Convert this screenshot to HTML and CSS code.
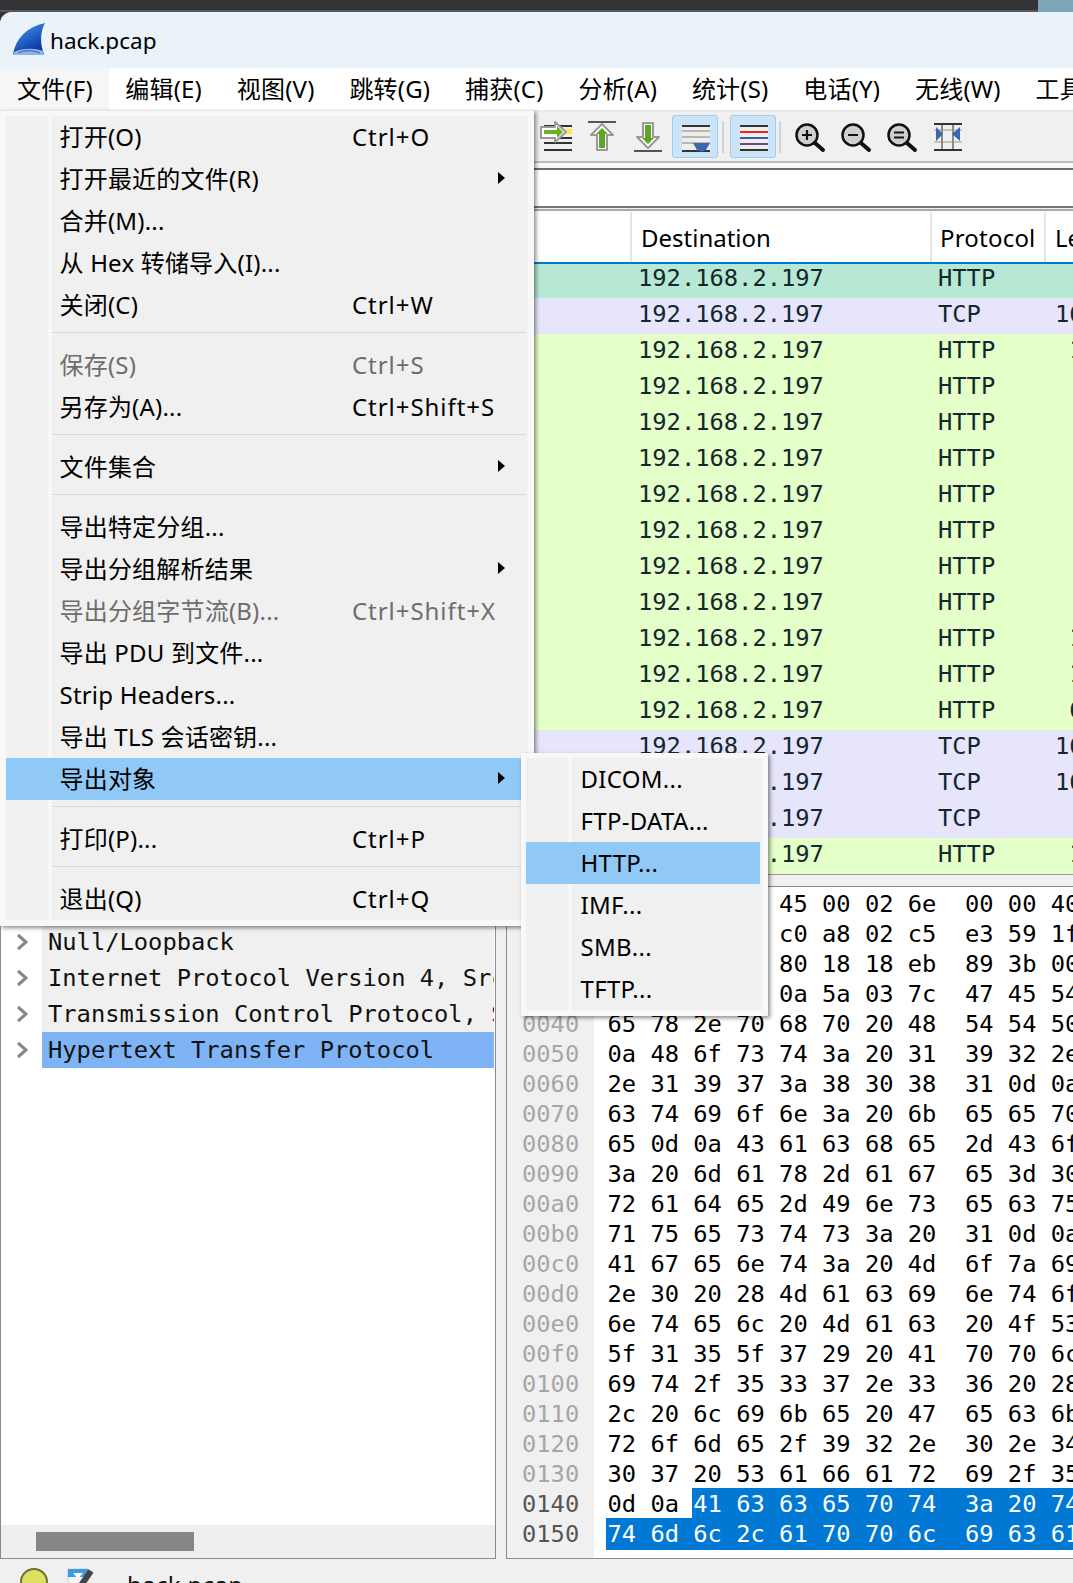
FILE: index.html
```html
<!DOCTYPE html>
<html lang="zh-CN">
<head>
<meta charset="utf-8">
<title>hack.pcap</title>
<link rel="stylesheet" href="styles.css">
</head>
<body>
<div class="desk"><div class="desk-dark"></div><div class="desk-wall"></div></div>
<div class="window">
  <header class="titlebar">
    <svg class="shark" viewBox="0 0 32 32">
      <defs><linearGradient id="sk" x1="0.2" y1="0.1" x2="0.7" y2="1"><stop offset="0" stop-color="#3a90ea"/><stop offset="1" stop-color="#0a2c9c"/></linearGradient></defs>
      <path d="M0 31C3 15 14 4 32 0C27 9 27 21 31 31Z" fill="url(#sk)"/>
      <path d="M1 29C10 25 22 25 30 28L31 32L0 32Z" fill="#8fb4e6"/>
      <path d="M5 30C12 27 20 27 27 30" fill="none" stroke="#2c62c0" stroke-width="1"/>
    </svg>
    <span class="title-text">hack.pcap</span>
  </header>
  <nav class="menubar">
    <span class="mb-item mb-open">文件(F)</span>
    <span class="mb-item">编辑(E)</span>
    <span class="mb-item">视图(V)</span>
    <span class="mb-item">跳转(G)</span>
    <span class="mb-item">捕获(C)</span>
    <span class="mb-item">分析(A)</span>
    <span class="mb-item">统计(S)</span>
    <span class="mb-item">电话(Y)</span>
    <span class="mb-item">无线(W)</span>
    <span class="mb-item">工具(T)</span>
  </nav>
  <div class="toolbar">
    <span class="tool"><svg class="ic" viewBox="0 0 32 32">
      <path d="M4 5H32M16 17H32M4 22H32M4 29H32" stroke="#333" stroke-width="2" fill="none"/>
      <rect x="20" y="8" width="12" height="5" fill="#ffe45c"/>
      <path d="M1 6H15V1L26 11L15 21V17H1Z" fill="#fff" stroke="#999" stroke-width="2" stroke-linejoin="round"/>
      <path d="M4 9H17V5L23 11L17 17V13H4Z" fill="#6cb02a"/>
    </svg></span>
    <span class="tool"><svg class="ic" viewBox="0 0 32 32">
      <path d="M2 1H30" stroke="#555" stroke-width="2"/>
      <path d="M16 3L27 14H21V29H11V14H5Z" fill="#fff" stroke="#999" stroke-width="2" stroke-linejoin="round"/>
      <path d="M16 7L22 13H19V27H13V13H10Z" fill="#5fa61e"/>
    </svg></span>
    <span class="tool"><svg class="ic" viewBox="0 0 32 32">
      <path d="M2 30H30" stroke="#555" stroke-width="2"/>
      <path d="M16 27L27 16H21V2H11V16H5Z" fill="#fff" stroke="#999" stroke-width="2" stroke-linejoin="round"/>
      <path d="M16 23L22 17H19V4H13V17H10Z" fill="#5fa61e"/>
    </svg></span>
    <span class="tool tool-on tool-first"><svg class="ic" viewBox="0 0 32 32">
      <rect x="3" y="5" width="28" height="26" fill="#eeeeee"/>
      <path d="M3 10H31M3 16H31M3 22H31" stroke="#b8b8ae" stroke-width="2"/>
      <path d="M3 5H31M3 30H31" stroke="#333" stroke-width="2"/>
      <path d="M14 22H31L27 29L22.500 31L18 29Z" fill="#3a68ae"/>
    </svg></span>
    <span class="tool-sep"></span>
    <span class="tool tool-on"><svg class="ic" viewBox="0 0 32 32">
      <rect x="3" y="5" width="28" height="25" fill="#eeeeee"/>
      <path d="M3 5H31M3 29H31" stroke="#333" stroke-width="2"/>
      <path d="M3 11H31" stroke="#e8262a" stroke-width="2"/>
      <path d="M3 17H31" stroke="#3464a8" stroke-width="2"/>
      <path d="M3 23H31" stroke="#6e4a80" stroke-width="2"/>
    </svg></span>
    <span class="tool-sep tool-sep-2"></span>
    <span class="tool"><svg class="ic" viewBox="0 0 32 32">
      <circle cx="13" cy="14" r="10.500" fill="#cfcfcf" stroke="#111" stroke-width="2.500"/>
      <path d="M21 22L29 29" stroke="#111" stroke-width="4" stroke-linecap="round"/>
      <path d="M8 14H18M13 9V19" stroke="#111" stroke-width="2.200"/>
    </svg></span>
    <span class="tool"><svg class="ic" viewBox="0 0 32 32">
      <circle cx="13" cy="14" r="10.500" fill="#cfcfcf" stroke="#111" stroke-width="2.500"/>
      <path d="M21 22L29 29" stroke="#111" stroke-width="4" stroke-linecap="round"/>
      <path d="M8 14H18" stroke="#111" stroke-width="2.200"/>
    </svg></span>
    <span class="tool"><svg class="ic" viewBox="0 0 32 32">
      <circle cx="13" cy="14" r="10.500" fill="#cfcfcf" stroke="#111" stroke-width="2.500"/>
      <path d="M21 22L29 29" stroke="#111" stroke-width="4" stroke-linecap="round"/>
      <path d="M8 11.500H18M8 16.500H18" stroke="#111" stroke-width="2.200"/>
    </svg></span>
    <span class="tool"><svg class="ic" viewBox="0 0 32 32">
      <path d="M2 9H30M2 21H30" stroke="#c4c4bc" stroke-width="2"/>
      <path d="M10 3V29M21 3V29" stroke="#8a8a8a" stroke-width="2"/>
      <path d="M2 3H30M2 29H30" stroke="#333" stroke-width="2"/>
      <path d="M4 6L11 13L4 20Z M28 6L20 13L28 20Z" fill="#3a68ae"/>
    </svg></span>
  </div>
  <div class="rule-gray"></div>
  <div class="rule-gap"></div>
  <div class="filterbar"></div>
  <div class="rule-double"></div>

  <section class="plist">
    <div class="phead">
      <span class="ph"></span>
      <span class="ph ph-dst">Destination</span>
      <span class="ph ph-pro">Protocol</span>
      <span class="ph ph-len">Length</span>
    </div>
    <div class="prow r-sel"><span></span><span class="p-dst">192.168.2.197</span><span class="p-pro">HTTP</span><span class="p-len"></span></div>
    <div class="prow r-tcp"><span></span><span class="p-dst">192.168.2.197</span><span class="p-pro">TCP</span><span class="p-len">16</span></div>
    <div class="prow r-http"><span></span><span class="p-dst">192.168.2.197</span><span class="p-pro">HTTP</span><span class="p-len"> 1</span></div>
    <div class="prow r-http"><span></span><span class="p-dst">192.168.2.197</span><span class="p-pro">HTTP</span><span class="p-len"></span></div>
    <div class="prow r-http"><span></span><span class="p-dst">192.168.2.197</span><span class="p-pro">HTTP</span><span class="p-len"></span></div>
    <div class="prow r-http"><span></span><span class="p-dst">192.168.2.197</span><span class="p-pro">HTTP</span><span class="p-len"></span></div>
    <div class="prow r-http"><span></span><span class="p-dst">192.168.2.197</span><span class="p-pro">HTTP</span><span class="p-len"></span></div>
    <div class="prow r-http"><span></span><span class="p-dst">192.168.2.197</span><span class="p-pro">HTTP</span><span class="p-len"></span></div>
    <div class="prow r-http"><span></span><span class="p-dst">192.168.2.197</span><span class="p-pro">HTTP</span><span class="p-len"></span></div>
    <div class="prow r-http"><span></span><span class="p-dst">192.168.2.197</span><span class="p-pro">HTTP</span><span class="p-len"></span></div>
    <div class="prow r-http"><span></span><span class="p-dst">192.168.2.197</span><span class="p-pro">HTTP</span><span class="p-len"> 1</span></div>
    <div class="prow r-http"><span></span><span class="p-dst">192.168.2.197</span><span class="p-pro">HTTP</span><span class="p-len"> 1</span></div>
    <div class="prow r-http"><span></span><span class="p-dst">192.168.2.197</span><span class="p-pro">HTTP</span><span class="p-len"> 6</span></div>
    <div class="prow r-tcp"><span></span><span class="p-dst">192.168.2.197</span><span class="p-pro">TCP</span><span class="p-len">16</span></div>
    <div class="prow r-tcp"><span></span><span class="p-dst">192.168.2.197</span><span class="p-pro">TCP</span><span class="p-len">16</span></div>
    <div class="prow r-tcp"><span></span><span class="p-dst">192.168.2.197</span><span class="p-pro">TCP</span><span class="p-len"></span></div>
    <div class="prow r-http"><span></span><span class="p-dst">192.168.2.197</span><span class="p-pro">HTTP</span><span class="p-len"> 1</span></div>
  </section>

  <div class="panes">
    <section class="tree">
      <div class="tree-list">
        <div class="trow"><span class="twist"></span><span class="ttext ttext-blank"></span></div>
        <div class="trow"><span class="twist"><svg class="chev" viewBox="0 0 12 18"><path d="M2 2L10 9L2 16"/></svg></span><span class="ttext">Null/Loopback</span></div>
        <div class="trow"><span class="twist"><svg class="chev" viewBox="0 0 12 18"><path d="M2 2L10 9L2 16"/></svg></span><span class="ttext">Internet Protocol Version 4, Src: 192.168.2.1</span></div>
        <div class="trow"><span class="twist"><svg class="chev" viewBox="0 0 12 18"><path d="M2 2L10 9L2 16"/></svg></span><span class="ttext">Transmission Control Protocol, Src Port: 8081</span></div>
        <div class="trow"><span class="twist"><svg class="chev" viewBox="0 0 12 18"><path d="M2 2L10 9L2 16"/></svg></span><span class="ttext ttext-sel">Hypertext Transfer Protocol</span></div>
      </div>
      <div class="hscroll"><span class="hthumb"></span></div>
    </section>
    <section class="hex">
      <div class="hrow"><span class="hoff">0000</span><span class="hbytes">            45 00 02 6e  00 00 40</span></div>
      <div class="hrow"><span class="hoff">0010</span><span class="hbytes">            c0 a8 02 c5  e3 59 1f</span></div>
      <div class="hrow"><span class="hoff">0020</span><span class="hbytes">            80 18 18 eb  89 3b 00</span></div>
      <div class="hrow"><span class="hoff">0030</span><span class="hbytes">            0a 5a 03 7c  47 45 54</span></div>
      <div class="hrow"><span class="hoff">0040</span><span class="hbytes">65 78 2e 70 68 70 20 48  54 54 50</span></div>
      <div class="hrow"><span class="hoff">0050</span><span class="hbytes">0a 48 6f 73 74 3a 20 31  39 32 2e</span></div>
      <div class="hrow"><span class="hoff">0060</span><span class="hbytes">2e 31 39 37 3a 38 30 38  31 0d 0a</span></div>
      <div class="hrow"><span class="hoff">0070</span><span class="hbytes">63 74 69 6f 6e 3a 20 6b  65 65 70</span></div>
      <div class="hrow"><span class="hoff">0080</span><span class="hbytes">65 0d 0a 43 61 63 68 65  2d 43 6f</span></div>
      <div class="hrow"><span class="hoff">0090</span><span class="hbytes">3a 20 6d 61 78 2d 61 67  65 3d 30</span></div>
      <div class="hrow"><span class="hoff">00a0</span><span class="hbytes">72 61 64 65 2d 49 6e 73  65 63 75</span></div>
      <div class="hrow"><span class="hoff">00b0</span><span class="hbytes">71 75 65 73 74 73 3a 20  31 0d 0a</span></div>
      <div class="hrow"><span class="hoff">00c0</span><span class="hbytes">41 67 65 6e 74 3a 20 4d  6f 7a 69</span></div>
      <div class="hrow"><span class="hoff">00d0</span><span class="hbytes">2e 30 20 28 4d 61 63 69  6e 74 6f</span></div>
      <div class="hrow"><span class="hoff">00e0</span><span class="hbytes">6e 74 65 6c 20 4d 61 63  20 4f 53</span></div>
      <div class="hrow"><span class="hoff">00f0</span><span class="hbytes">5f 31 35 5f 37 29 20 41  70 70 6c</span></div>
      <div class="hrow"><span class="hoff">0100</span><span class="hbytes">69 74 2f 35 33 37 2e 33  36 20 28</span></div>
      <div class="hrow"><span class="hoff">0110</span><span class="hbytes">2c 20 6c 69 6b 65 20 47  65 63 6b</span></div>
      <div class="hrow"><span class="hoff">0120</span><span class="hbytes">72 6f 6d 65 2f 39 32 2e  30 2e 34</span></div>
      <div class="hrow"><span class="hoff">0130</span><span class="hbytes">30 37 20 53 61 66 61 72  69 2f 35</span></div>
      <div class="hrow"><span class="hoff hoff-on">0140</span><span class="hbytes">0d 0a <span class="hsel">41 63 63 65 70 74  3a 20 74</span></span></div>
      <div class="hrow hrow-last"><span class="hoff hoff-on">0150</span><span class="hbytes"><span class="hsel">74 6d 6c 2c 61 70 70 6c  69 63 61</span></span></div>
    </section>
  </div>

  <footer class="statusbar">
    <span class="led"></span>
    <svg class="note" viewBox="0 0 28 30">
      <rect x="1" y="2" width="20" height="28" fill="#f4f4f4" stroke="#ccc"/>
      <rect x="1" y="2" width="20" height="8" fill="#3f9be0"/>
      <path d="M6 6L11 12L16 6Z" fill="#fff"/>
      <path d="M8 27L24 4" stroke="#444" stroke-width="6"/>
      <path d="M4 18H14M4 21H11" stroke="#aaa" stroke-width="1.500"/>
    </svg>
    <span class="status-text">hack.pcap</span>
  </footer>

  <div class="menu">
    <div class="menu-in">
      <div class="mi"><span class="mi-label">打开(O)</span><span class="mi-key">Ctrl+O</span></div>
      <div class="mi"><span class="mi-label">打开最近的文件(R)</span><span class="arr"></span></div>
      <div class="mi"><span class="mi-label">合并(M)...</span></div>
      <div class="mi"><span class="mi-label">从 Hex 转储导入(I)...</span></div>
      <div class="mi"><span class="mi-label">关闭(C)</span><span class="mi-key">Ctrl+W</span></div>
      <div class="msep"></div>
      <div class="mi mi-off"><span class="mi-label">保存(S)</span><span class="mi-key">Ctrl+S</span></div>
      <div class="mi"><span class="mi-label">另存为(A)...</span><span class="mi-key">Ctrl+Shift+S</span></div>
      <div class="msep"></div>
      <div class="mi"><span class="mi-label">文件集合</span><span class="arr"></span></div>
      <div class="msep"></div>
      <div class="mi"><span class="mi-label">导出特定分组...</span></div>
      <div class="mi"><span class="mi-label">导出分组解析结果</span><span class="arr"></span></div>
      <div class="mi mi-off"><span class="mi-label">导出分组字节流(B)...</span><span class="mi-key">Ctrl+Shift+X</span></div>
      <div class="mi"><span class="mi-label">导出 PDU 到文件...</span></div>
      <div class="mi"><span class="mi-label">Strip Headers...</span></div>
      <div class="mi"><span class="mi-label">导出 TLS 会话密钥...</span></div>
      <div class="mi mi-hot"><span class="mi-label">导出对象</span><span class="arr"></span></div>
      <div class="msep"></div>
      <div class="mi"><span class="mi-label">打印(P)...</span><span class="mi-key">Ctrl+P</span></div>
      <div class="msep"></div>
      <div class="mi"><span class="mi-label">退出(Q)</span><span class="mi-key">Ctrl+Q</span></div>
    </div>
  </div>

  <div class="submenu">
    <div class="sub-in">
      <div class="si">DICOM...</div>
      <div class="si">FTP-DATA...</div>
      <div class="si si-hot">HTTP...</div>
      <div class="si">IMF...</div>
      <div class="si">SMB...</div>
      <div class="si">TFTP...</div>
    </div>
  </div>
</div>
</body>
</html>
```
FILE: styles.css
```css
html, body {
  margin: 0;
  padding: 0;
  height: 1583px;
  overflow: hidden;
  background: #333336;
}
body {
  font-family: "Noto Sans", "Noto Sans CJK SC", sans-serif;
  font-size: 24px;
  color: #000;
}
.desk {
  display: flex;
  height: 12px;
}
.desk-dark {
  flex: 1;
  background: #333336;
  border-bottom: 2px solid #58585c;
}
.desk-wall {
  width: 35px;
  background: #7fa6b8;
}
.window {
  position: relative;
  width: 1073px;
  height: 1571px;
  background: #f0f0f0;
  border-radius: 12px 0 0 0;
  overflow: hidden;
}
.titlebar {
  display: flex;
  align-items: center;
  height: 56px;
  background: #ebf3fa;
  padding-left: 13px;
  box-sizing: border-box;
}
.shark {
  width: 32px;
  height: 32px;
  margin-top: -2px;
}
.title-text {
  margin-left: 5px;
  font-size: 22.5px;
  line-height: 32px;
  margin-top: 2px;
}
.menubar {
  display: flex;
  height: 42px;
  background: #fff;
  white-space: nowrap;
}
.mb-item {
  padding: 0 17.4px;
  line-height: 42px;
  height: 42px;
  flex: none;
  letter-spacing: .2px;
}
.mb-open {
  background: #f6f6f6;
  padding: 0 16px 0 17px;
}
.mb-open + .mb-item {
  margin-left: -1px;
}
.toolbar {
  display: flex;
  align-items: flex-start;
  height: 51px;
  box-sizing: border-box;
  border-top: 2px solid #e8e8e8;
  padding: 3px 0 0 533px;
  background: #f0f0f0;
}
.tool {
  display: flex;
  justify-content: center;
  align-items: flex-start;
  box-sizing: border-box;
  width: 46px;
  height: 43px;
  padding-top: 5px;
  border: 1px solid transparent;
  border-radius: 3px;
  flex: none;
}
.tool-first {
  margin-left: 1px;
}
.tool-on {
  background: #cce4f7;
  border-color: #9ccdf5;
}
.ic {
  width: 32px;
  height: 32px;
}
.tool-sep {
  width: 2px;
  height: 32px;
  margin: 6px 6px 0 4px;
  background: #d4d4d4;
  flex: none;
}
.tool-sep-2 {
  margin: 6px 6px 0 3px;
}
.rule-gray {
  height: 2px;
  background: #bcbcbc;
}
.rule-gap {
  height: 5px;
  background: #f7f7f7;
}
.filterbar {
  box-sizing: border-box;
  border-top: 2px solid #6c6c6c;
  background: #fff;
  height: 38px;
}
.rule-double {
  height: 5px;
  box-sizing: border-box;
  border-top: 2px solid #777;
  border-bottom: 2px solid #aaa;
  background: #f0f0f0;
}
.plist {
  background: #fff;
  height: 664px;
  border-bottom: 1px solid #999;
  box-sizing: border-box;
  overflow: hidden;
}
.phead {
  display: grid;
  grid-template-columns: 632px 300px 114px 1fr;
  height: 51px;
  padding-top: 1px;
  box-sizing: border-box;
  background: #fff;
}
.ph {
  box-sizing: border-box;
  line-height: 52px;
  white-space: nowrap;
  overflow: hidden;
  border-right: 2px solid #e4e4e4;
  height: 50px;
}
.ph-dst {
  padding-left: 9px;
}
.ph-pro {
  padding-left: 8px;
  letter-spacing: .2px;
}
.ph-len {
  padding-left: 9px;
  border-right: 0;
}
.prow {
  display: grid;
  grid-template-columns: 632px 300px 114px 1fr;
  height: 36px;
  font-family: "DejaVu Sans Mono", monospace;
  font-size: 23.75px;
  line-height: 32px;
  color: #12272e;
  white-space: pre;
}
.p-dst {
  padding-left: 6px;
}
.p-pro {
  padding-left: 6px;
}
.p-len {
  padding-left: 9px;
}
.r-sel {
  background: #b7e8d3;
  box-shadow: inset 0 2px 0 #0078d7;
}
.r-tcp {
  background: #e6e5fc;
}
.r-http {
  background: #e4ffc7;
}
.panes {
  display: flex;
  gap: 10px;
  margin-top: 11px;
  height: 673px;
}
.tree, .hex {
  box-sizing: border-box;
  border: 1px solid #8a8a94;
  background: #fff;
  height: 673px;
  overflow: hidden;
}
.tree {
  display: flex;
  flex-direction: column;
  width: 496px;
  flex: none;
  padding-top: 1px;
}
.tree-list {
  flex: 1;
  font-family: "DejaVu Sans Mono", monospace;
  font-size: 23.75px;
}
.trow {
  display: flex;
  height: 36px;
  margin-right: 1px;
}
.twist {
  display: flex;
  align-items: center;
  width: 41px;
  padding-left: 15px;
  box-sizing: border-box;
  flex: none;
}
.chev {
  width: 12px;
  height: 18px;
  fill: none;
  stroke: #888;
  stroke-width: 3;
}
.ttext {
  flex: 1;
  min-width: 0;
  padding-left: 6px;
  line-height: 36px;
  background: #f0f0f0;
  white-space: pre;
  overflow: hidden;
  color: #111;
}
.ttext-blank {
  background: #fff;
}
.ttext-sel {
  background: #7eb4f5;
}
.hscroll {
  height: 33px;
  background: #efefef;
  padding: 7px 0 0 35px;
  box-sizing: border-box;
  flex: none;
}
.hthumb {
  display: block;
  width: 158px;
  height: 19px;
  background: #868686;
}
.hex {
  flex: 1;
  min-width: 0;
  padding-top: 1px;
  font-family: "DejaVu Sans Mono", monospace;
  font-size: 23.75px;
  background: linear-gradient(to right, #f0f0f0 87px, #fff 87px);
  border-right: 0;
}
.hrow {
  display: flex;
  height: 30px;
  line-height: 32px;
  white-space: pre;
}
.hoff {
  width: 87px;
  box-sizing: border-box;
  padding-left: 15px;
  color: #a6a6a6;
  flex: none;
}
.hoff-on {
  color: #555;
}
.hbytes {
  padding-left: 13.5px;
  flex: 1;
  overflow: hidden;
}
.hsel {
  display: inline-block;
  height: 30px;
  margin-left: -1.5px;
  padding: 0 20px 0 1.5px;
  background: #0078d4;
  color: #fff;
  vertical-align: top;
}
.hrow-last .hsel {
  height: 32px;
  margin-left: 0;
}
.hrow-last .hbytes {
  padding-left: 12px;
  height: 32px;
}
.statusbar {
  display: flex;
  height: 24px;
  background: #f0f0f0;
  overflow: visible;
}
.led {
  box-sizing: border-box;
  width: 28px;
  height: 28px;
  margin: 9px 0 0 20px;
  border-radius: 50%;
  background: #e0e060;
  border: 2px solid #70703a;
  flex: none;
}
.note {
  width: 28px;
  height: 30px;
  margin: 8px 0 0 19px;
  flex: none;
}
.status-text {
  margin: 12px 0 0 32px;
  line-height: 28px;
  letter-spacing: .3px;
  color: #111;
}
.menu {
  position: absolute;
  left: 0;
  top: 98px;
  width: 534px;
  height: 816px;
  box-sizing: border-box;
  padding: 6px;
  background: #f8f8f8;
  border-top: 1px solid #e6e6e6;
  box-shadow: 2px 2px 4px rgba(0, 0, 0, .45);
}
.menu-in {
  height: 804px;
  background: linear-gradient(to right, #f0f0f0 42px, #f7f7f7 42px, #f7f7f7 46px, #f0f0f0 46px);
  margin-top: -1px;
}
.mi {
  display: flex;
  align-items: center;
  height: 42px;
  margin-right: 2px;
  padding-left: 53.5px;
  white-space: pre;
}
.mi-label {
  width: 292.5px;
  flex: none;
  line-height: 42px;
  letter-spacing: .2px;
}
.mi-key {
  line-height: 42px;
  letter-spacing: .95px;
}
.mi-off {
  color: #6d6d6d;
}
.mi-hot {
  background: #90c8f6;
}
.arr {
  width: 0;
  height: 0;
  margin: -2px 0 0 146px;
  border-left: 7px solid #000;
  border-top: 6px solid transparent;
  border-bottom: 6px solid transparent;
}
.msep {
  height: 1px;
  margin: 6px 2px 11px 46px;
  background: #d8d8d8;
}
.submenu {
  position: absolute;
  left: 521px;
  top: 741px;
  width: 247px;
  height: 263px;
  box-sizing: border-box;
  padding: 5px 6px 6px 5px;
  background: #f8f8f8;
  box-shadow: 2px 2px 4px rgba(0, 0, 0, .45);
}
.sub-in {
  height: 252px;
  background: linear-gradient(to right, #f0f0f0 42px, #f7f7f7 42px, #f7f7f7 46px, #f0f0f0 46px);
}
.si {
  height: 42px;
  line-height: 42px;
  margin-right: 2px;
  padding-left: 54.5px;
  letter-spacing: .3px;
  white-space: pre;
}
.si-hot {
  background: #90c8f6;
}
```
